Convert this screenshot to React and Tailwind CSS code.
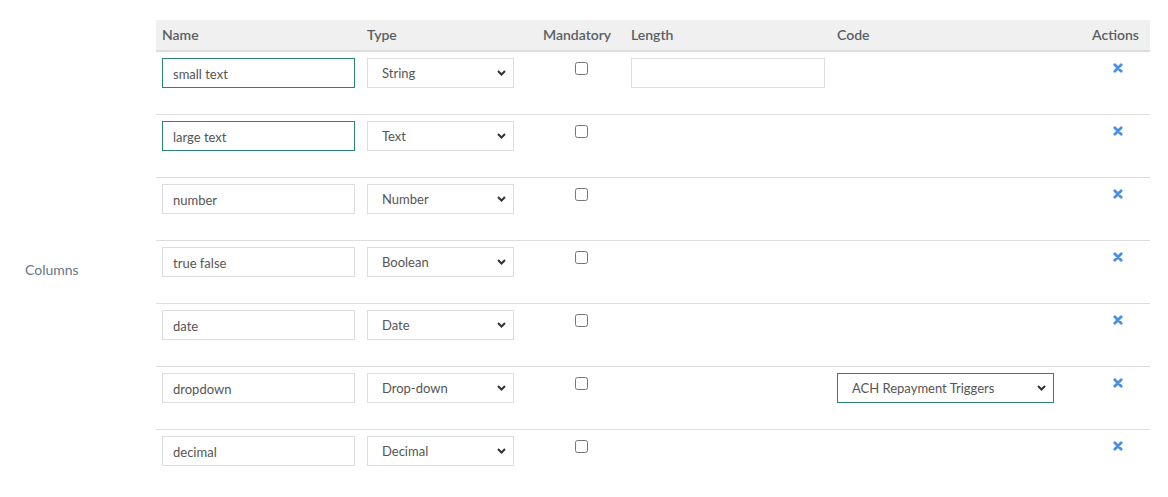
const rows = [
  { name: "small text", type: "String", focus: true, length: true },
  { name: "large text", type: "Text", focus: true },
  { name: "number", type: "Number" },
  { name: "true false", type: "Boolean" },
  { name: "date", type: "Date" },
  { name: "dropdown", type: "Drop-down", code: "ACH Repayment Triggers" },
  { name: "decimal", type: "Decimal" },
];

const types = ["String", "Text", "Number", "Boolean", "Date", "Drop-down", "Decimal"];

function Chevron() {
  return (
    <svg className="pointer-events-none absolute right-[8px] top-[12px]" width="9" height="6" viewBox="0 0 9 6">
      <path d="M1 1 L4.5 4.5 L8 1" fill="none" stroke="#333" strokeWidth="2" />
    </svg>
  );
}

// chunky "times" glyph like the old font-awesome one
function TimesIcon() {
  return (
    <svg width="10" height="10" viewBox="0 0 10 10">
      <path d="M1.8 1.8 L8.2 8.2 M8.2 1.8 L1.8 8.2" stroke="#4a8fe4" strokeWidth="2.8" strokeLinecap="round" />
    </svg>
  );
}

function Select({ value, options, width, green }) {
  return (
    <div className="relative" style={{ width }}>
      <select
        defaultValue={value}
        className={`h-[30px] w-full appearance-none bg-white pl-[14px] pt-[2px] text-[13px] text-[#555] outline-none border ${green ? "border-[#2a8470]" : "border-[#ddd]"}`}
      >
        {options.map((o) => (
          <option key={o}>{o}</option>
        ))}
      </select>
      <Chevron />
    </div>
  );
}

export default function App() {
  return (
    <div className="flex bg-white pt-[20px] text-[#555]" style={{ fontFamily: "Lato, 'Open Sans', sans-serif" }}>
      <div className="flex w-[156px] items-center pl-[25px] pt-[26px] text-[14px] text-[#667784]">Columns</div>
      <table className="w-[994px] table-fixed border-collapse">
        <colgroup>
          <col className="w-[205px]" />
          <col className="w-[176px]" />
          <col className="w-[88px]" />
          <col className="w-[206px]" />
          <col className="w-[255px]" />
          <col className="w-[64px]" />
        </colgroup>
        <thead>
          <tr className="h-[31px] bg-[#f0f0f0] border-b-2 border-[#dcdcdc] text-left text-[14px] text-[#5a5f63]">
            <th className="px-[6px] pb-[2px] font-semibold">Name</th>
            <th className="px-[6px] pb-[2px] font-semibold">Type</th>
            <th className="px-[6px] pb-[2px] font-semibold">Mandatory</th>
            <th className="px-[6px] pb-[2px] font-semibold">Length</th>
            <th className="px-[6px] pb-[2px] font-semibold">Code</th>
            <th className="px-[6px] pb-[2px] font-semibold">Actions</th>
          </tr>
        </thead>
        <tbody>
          {rows.map((r, i) => (
            <tr key={i} className={`h-[63px] align-top ${i > 0 ? "border-t border-[#ddd]" : ""}`}>
              <td className="px-[6px] pt-[6px]">
                <input
                  defaultValue={r.name}
                  className={`h-[30px] w-[193px] border bg-white px-[10px] pt-[2px] text-[13px] text-[#555] outline-none ${r.focus ? "border-[#2a8470]" : "border-[#ddd]"}`}
                />
              </td>
              <td className="px-[6px] pt-[6px]">
                <Select value={r.type} options={types} width={147} />
              </td>
              <td className="pt-[10px]">
                <div className="flex justify-center">
                  <input type="checkbox" className="m-0 h-[13px] w-[13px]" />
                </div>
              </td>
              <td className="px-[6px] pt-[6px]">
                {r.length && <input className="h-[30px] w-[194px] border border-[#ddd] bg-white outline-none" />}
              </td>
              <td className="px-[6px] pt-[6px]">
                {r.code && <Select value={r.code} options={[r.code]} width={217} green />}
              </td>
              <td className="pt-[11px]">
                <div className="flex justify-center pr-[1px]">
                  <TimesIcon />
                </div>
              </td>
            </tr>
          ))}
        </tbody>
      </table>
    </div>
  );
}
